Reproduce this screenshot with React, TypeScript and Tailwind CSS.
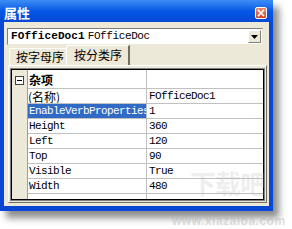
import React from "react";

const mono = { fontFamily: '"Liberation Mono", "DejaVu Sans Mono", monospace' };
const cjk = { fontFamily: '"Noto Sans CJK SC", "Noto Sans", sans-serif' };

type Row = { name: string; value: string; cjkName?: boolean; selected?: boolean };

const rows: Row[] = [
  { name: "(名称)", value: "FOfficeDoc1", cjkName: true },
  { name: "EnableVerbProperties", value: "1", selected: true },
  { name: "Height", value: "360" },
  { name: "Left", value: "120" },
  { name: "Top", value: "90" },
  { name: "Visible", value: "True" },
  { name: "Width", value: "480" },
];

function CloseButton() {
  return (
    <div className="w-[12px] h-[12px] rounded-[2px] border border-white bg-gradient-to-b from-[#E98A6B] to-[#D2461D] flex items-center justify-center">
      <svg width="8" height="8" viewBox="0 0 8 8">
        <path d="M1.5 1.5 L6.5 6.5 M6.5 1.5 L1.5 6.5" stroke="white" strokeWidth="1.6" strokeLinecap="square" />
      </svg>
    </div>
  );
}

export default function App() {
  return (
    <div className="w-[292px] h-[229px] bg-white relative overflow-hidden">
      <div className="w-[273px] h-[211px] flex flex-col shadow-[6px_7px_7px_rgba(0,0,0,0.45)]">
        {/* Title bar */}
        <div className="h-[22px] shrink-0 flex items-center justify-between pl-[4px] pr-[6px] bg-gradient-to-b from-[#3D8DF5] via-[#0657E6] to-[#0349D3]">
          <span className="text-white font-bold text-[13px] leading-none pt-[2px]" style={cjk}>
            属性
          </span>
          <div className="pt-[3px]">
            <CloseButton />
          </div>
        </div>

        {/* Body */}
        <div className="flex-1 flex flex-col bg-[#ECE9D8] border-l-4 border-r-4 border-b-[5px] border-[#0A46D4] pt-[6px]">
          {/* Combo */}
          <div className="ml-[3px] mr-[6px] h-[17px] flex items-center bg-white border-t border-l border-[#7F7F7F] border-r border-b border-r-[#ECE9D8] border-b-[#ECE9D8]">
            <div className="flex-1 flex items-center pl-[3px] overflow-hidden whitespace-nowrap text-black text-[11px] leading-none" style={mono}>
              <span className="font-bold tracking-[0.1px]">FOfficeDoc1</span>
              <span className="ml-[3px] tracking-[-0.4px]">FOfficeDoc</span>
            </div>
            <div className="w-[13px] h-[13px] mr-[1px] bg-[#ECE9D8] border-t border-l border-white border-r border-b border-r-[#808080] border-b-[#808080] flex items-center justify-center">
              <svg width="7" height="4" viewBox="0 0 7 4">
                <path d="M0 0 H7 L3.5 4 Z" fill="black" />
              </svg>
            </div>
          </div>

          {/* Tabs */}
          <div className="h-[20px] flex items-end pl-[5px]">
            <div className="w-[58px] h-[17px] flex items-center pl-[6px] border-t border-l border-white border-r border-r-[#716F64] rounded-tl-[2px] text-[12px] text-black leading-none" style={cjk}>
              按字母序
            </div>
            <div className="w-[64px] h-[20px] flex items-start pt-[3px] pl-[7px] border-t border-l border-white border-r-2 border-r-[#716F64] rounded-tl-[2px] -ml-[1px] bg-[#ECE9D8] relative z-10 text-[12px] text-black leading-none" style={cjk}>
              按分类序
            </div>
          </div>

          {/* Tab panel */}
          <div className="ml-[4px] mr-[2px] h-[138px] border-t border-l border-white border-r border-b border-r-[#716F64] border-b-[#716F64] pl-[1px] pt-[2px] pr-[1px]">
            <div className="h-[133px] border border-[#808080]">
              <div className="h-full border border-black bg-white flex">
                {/* gutter */}
                <div className="w-[16px] shrink-0 bg-[#ECE9D8] border-r border-[#9D9D9D] relative">
                  <div className="absolute left-[3px] top-[6px] w-[9px] h-[9px] border border-[#404040] bg-white flex items-center justify-center">
                    <div className="w-[5px] h-[1px] bg-black" />
                  </div>
                </div>
                <div className="flex-1 flex flex-col">
                  {/* category row */}
                  <div className="h-[19px] flex border-b border-[#C0C0C0] shrink-0">
                    <div className="w-[119px] border-r border-[#C0C0C0] flex items-end pb-[2px] pl-[1px] text-[12px] font-bold text-black leading-none" style={cjk}>
                      杂项
                    </div>
                    <div className="flex-1" />
                  </div>
                  {rows.map((r) => (
                    <div key={r.name} className="h-[15px] flex border-b border-[#C0C0C0] shrink-0">
                      <div
                        className={`w-[119px] border-r border-[#C0C0C0] flex items-center overflow-hidden whitespace-nowrap leading-[13px] ${
                          r.selected ? "bg-[#316AC5] text-white" : "text-black"
                        } ${r.cjkName ? "pl-0 text-[12px]" : "pl-[1px] text-[11px] tracking-[-0.6px]"}`}
                        style={r.cjkName ? cjk : mono}
                      >
                        {r.name}
                      </div>
                      <div className="flex-1 flex items-center pl-[2px] text-[11px] tracking-[-0.6px] text-black leading-[13px] whitespace-nowrap" style={mono}>
                        {r.value}
                      </div>
                    </div>
                  ))}
                  <div className="flex-1 flex">
                    <div className="w-[119px] border-r border-[#C0C0C0]" />
                    <div className="flex-1" />
                  </div>
                </div>
              </div>
            </div>
          </div>
        </div>
      </div>

      {/* watermark */}
      <div className="absolute left-[190px] top-[170px] text-[26px] font-bold leading-none text-[rgba(180,180,180,0.22)] tracking-[-1px] pointer-events-none whitespace-nowrap" style={cjk}>
        下载吧
      </div>
      <div className="absolute left-[172px] top-[215px] text-[12px] font-bold leading-none text-[rgba(170,170,170,0.4)] tracking-[0.5px] pointer-events-none whitespace-nowrap" style={{ fontFamily: '"Liberation Sans", Arial, sans-serif' }}>
        www.xiazaiba.com
      </div>
    </div>
  );
}
